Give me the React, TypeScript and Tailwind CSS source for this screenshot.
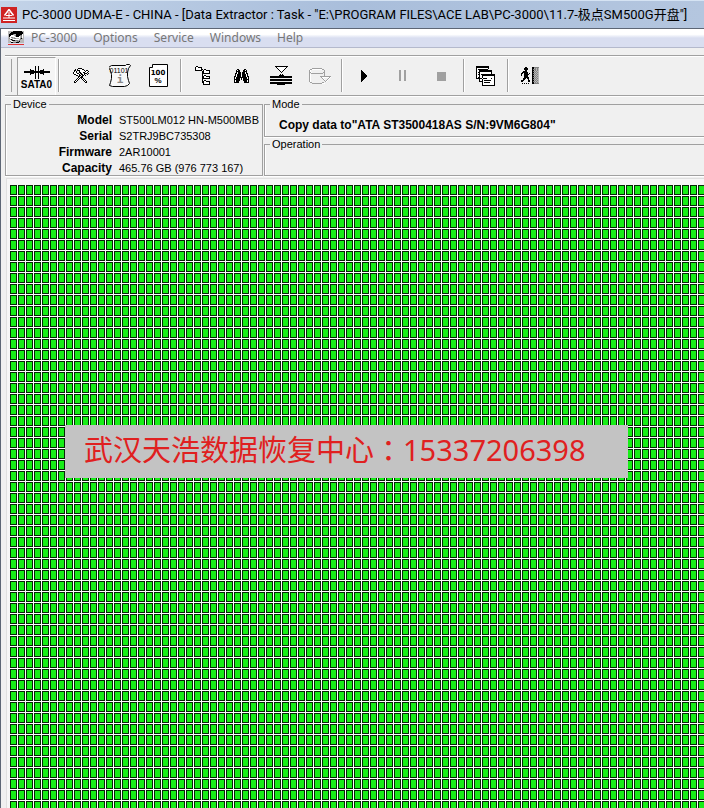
import type { ReactNode } from 'react';

interface PixelIconProps {
  rows: string[];
  className?: string;
}

// '#' = solid pixel, '+' = grey pixel, '-' = light grey pixel, 'o' = white pixel
const PixelIcon = ({ rows, className }: PixelIconProps) => {
  const width = Math.max(...rows.map((row) => row.length));
  const trace = (mark: string) =>
    rows
      .map((row, y) =>
        [...row].map((c, x) => (c === mark ? `M${x} ${y}h1v1h-1z` : '')).join('')
      )
      .join('');

  return (
    <svg
      width={width}
      height={rows.length}
      viewBox={`0 0 ${width} ${rows.length}`}
      shapeRendering="crispEdges"
      className={className}
      aria-hidden="true"
    >
      <path d={trace('o')} fill="#fff" />
      <path d={trace('-')} fill="#b8b8b8" />
      <path d={trace('+')} fill="#828282" />
      <path d={trace('#')} fill="currentColor" />
    </svg>
  );
};

const toolsRows = [
  '.....####.......',
  '..#.#oooo##.....',
  '.##.###oooo#.##.',
  '.#o#..#ooooo#oo#',
  '#oo#..##oo##oo#.',
  '#ooo##o##oo###.#',
  '.##ooo#.##o#..#.',
  '...##o##.##o#...',
  '.....##o##......',
  '.....#o###......',
  '....#o#.#o#.....',
  '...#o#...#o#....',
  '..#o#.....#o#...',
  '.#o#.......#o#..',
  '.##.........##..',
];

const treeRows = [
  '.##.............',
  '#oo####.........',
  '#ooooo#.........',
  '#ooooo##.##.....',
  '#######.#oo####.',
  '.......##ooooo#.',
  '.......##ooooo#.',
  '.......########.',
  '.......#........',
  '.......#.##.....',
  '.......##oo####.',
  '.......##ooooo#.',
  '.......########.',
  '.......#........',
  '.......#.##.....',
  '.......##oo####.',
  '.......##ooooo#.',
  '........#ooooo#.',
  '........#######.',
];

const binocularRows = [
  '...##.....##...',
  '..#o##...##o#..',
  '..####...####..',
  '..#o###.###o#..',
  '.##o###.###o##.',
  '.#o####.####o#.',
  '.#o####o####o#.',
  '##o####o####o##',
  '#o###########o#',
  '#o####o#o####o#',
  '######o#o######',
  '#o####...####o#',
  '#o###.....###o#',
  '#####.....#####',
];

const stackRows = [
  '.....#############....',
  '......#ooooooooo#.....',
  '.......#ooooooo#......',
  '........#ooooo#.......',
  '.........#ooo#........',
  '..........#o#.........',
  '...........#..........',
  '......................',
  '..........#.#.........',
  '.........#####........',
  '######################',
  '######################',
  '......................',
  '######################',
  '######################',
  '......................',
  '######################',
  '######################',
  '.......########.......',
];

const diskRows = [
  '...##########.........',
  '.##oooooooooo##.......',
  '#o.............#......',
  '#o.............#......',
  '##o...........##......',
  '#.############.#......',
  '#o.............#......',
  '#o.............#......',
  '#o.........###########',
  '#o..........#ooooooo#o',
  '#o...........#o....#o.',
  '#o............#o..#o..',
  '#o.............#.#o...',
  '#o..............#o....',
  '.##..........##.......',
  '...##########ooo......',
];

const windowsRows = [
  '#############......',
  '#############......',
  '#ooooooooooo#......',
  '#o##########.......',
  '#oo#############...',
  '#oo#############...',
  '#o##ooooooooooo#...',
  '#oo#ooooooooooo#...',
  '#o##o##############',
  '#oo#oo#############',
  '#oo#oo#ooooooooooo#',
  '#o##oo#ooooooooooo#',
  '######o####oooo#oo#',
  '...#oo#ooooooooooo#',
  '...#oo#o#######ooo#',
  '...####ooooooooooo#',
  '......#o######oooo#',
  '......#ooooooooooo#',
  '......#ooooooooooo#',
  '......#############',
];

const exitRows = [
  '....##.....##+++++',
  '...####....##-+-+-',
  '...####....#+++-+-',
  '....##.....##-+-+-',
  '..####.....#++-+--',
  '.######....##-+-+-',
  '##.####.#..#++-+--',
  '#..#####...##-+-+-',
  '#..####....#++-+--',
  '...####....##-+-+-',
  '...#####...#++-+--',
  '..###.##...##-+-+-',
  '..##...#...#++-+--',
  '###....##..##-+-+-',
  '##.....##..#++-+--',
  '...........##-+-+-',
  '.#.#.#.#...##+++++',
];

const menuDiskRows = [
  '-----#########--',
  '---############-',
  '--#############-',
  '-####+--######o-',
  '-##ooo-+####++o-',
  '-#ooooo-###o-+o-',
  '--o++--ooooo-+o-',
  '-+oo--++---o+#--',
  '--+#+oooooo-+---',
  '--o-###+++-+----',
  '--+oo----++#----',
  '---##+++###-----',
];

const AppLogo = () => (
  <svg width="16" height="16" viewBox="0 0 16 16" aria-hidden="true">
    <rect width="16" height="16" fill="#cf2323" />
    <path d="M8 2.500 3.500 8.500M8 2.500l4.500 6" stroke="#fff" strokeWidth="1.500" fill="none" />
    <path d="M5 8.500h6M2 11h12M2 13.500h12" stroke="#fff" strokeWidth="1.200" />
    <path d="M8 5v6" stroke="#fff" strokeWidth="1" />
  </svg>
);

const SataIcon = () => (
  <svg width="26" height="13" viewBox="0 0 26 13" shapeRendering="crispEdges" aria-hidden="true">
    <path d="M0 5h26v2H0zM6 3h1v6H6zM7 4h3v4H7zM19 3h1v6h-1zM16 4h3v4h-3z" fill="#000" />
    <path d="M11 0h1v13h-1zM14 0h1v13h-1z" fill="#000" />
  </svg>
);

const ScrollIcon = () => (
  <svg width="22" height="23" viewBox="0 0 22 23" aria-hidden="true">
    <path
      d="M2.500 1.500h14l1-1h3l1 1-2 3-1 4v4l1 4 1 3-2 2-3 1h-12l-3-1 1-3 1-4v-4l-1-4-2-3z"
      fill="#f8f8f8"
      stroke="#000"
    />
    <text x="10" y="9" fontSize="7" textAnchor="middle" fontFamily="Liberation Sans, sans-serif">
      01101
    </text>
    <text x="11" y="19" fontSize="11" fontWeight="bold" textAnchor="middle" fill="#888" fontFamily="DejaVu Sans Mono, monospace">
      i
    </text>
  </svg>
);

const PercentIcon = () => (
  <svg width="19" height="23" viewBox="0 0 19 23" aria-hidden="true">
    <path d="M3.500 .5h15v22H.5v-19h3z" fill="#fff" stroke="#000" />
    <text x="9" y="11" fontSize="7" fontWeight="bold" textAnchor="middle" fontFamily="DejaVu Sans, sans-serif">
      100
    </text>
    <text x="9" y="19" fontSize="8" fontWeight="bold" textAnchor="middle" fontFamily="Liberation Sans, sans-serif">
      %
    </text>
  </svg>
);

const Glyph = ({ d, fill }: { d: string; fill: string }) => (
  <svg width="12" height="12" viewBox="0 0 12 12" shapeRendering="crispEdges" aria-hidden="true">
    <path d={d} fill={fill} />
  </svg>
);

interface Tool {
  label: string;
  icon: ReactNode;
  disabled?: boolean;
}

const toolGroups: Tool[][] = [
  [
    { label: 'Settings', icon: <PixelIcon rows={toolsRows} /> },
    { label: 'Script', icon: <ScrollIcon /> },
    { label: 'Statistics', icon: <PercentIcon /> },
  ],
  [
    { label: 'Folder tree', icon: <PixelIcon rows={treeRows} /> },
    { label: 'Find', icon: <PixelIcon rows={binocularRows} /> },
    { label: 'Filter', icon: <PixelIcon rows={stackRows} /> },
    { label: 'Save', icon: <PixelIcon rows={diskRows} className="text-[#a0a0a0]" />, disabled: true },
  ],
  [
    { label: 'Start', icon: <Glyph d="M3 0h1v1h1v1h1v1h1v1h1v1h1v2H8v1H7v1H6v1H5v1H4v1H3z" fill="#000" /> },
    { label: 'Pause', icon: <Glyph d="M2 0h2v11H2zM7 0h2v11H7z" fill="#a0a0a0" />, disabled: true },
    { label: 'Stop', icon: <Glyph d="M1 2h9v9H1z" fill="#a0a0a0" />, disabled: true },
  ],
  [{ label: 'Windows', icon: <PixelIcon rows={windowsRows} /> }],
  [{ label: 'Exit', icon: <PixelIcon rows={exitRows} /> }],
];

const menus = ['PC-3000', 'Options', 'Service', 'Windows', 'Help'];

const device = [
  { name: 'Model', value: 'ST500LM012 HN-M500MBB' },
  { name: 'Serial', value: 'S2TRJ9BC735308' },
  { name: 'Firmware', value: '2AR10001' },
  { name: 'Capacity', value: '465.76 GB (976 773 167)' },
];

const Separator = () => (
  <div className="my-[3px] ml-[2px] mr-px w-[2px] shrink-0 border-l border-[#a0a0a0] bg-white" />
);

const Toolbar = () => (
  <div className="ml-[4px] mt-[7px] flex h-[41px] border-y border-[#a0a0a0] shadow-[inset_0_1px_#fff,0_1px_#fff]">
    <div className="my-[3px] ml-[6px] w-px shrink-0 bg-[#a0a0a0]" />
    <button className="ml-[5px] mt-px flex w-[39px] shrink-0 flex-col items-center border border-b-0 border-[#a0a0a0] border-r-white bg-[#f5f5f5] pt-[8px]">
      <SataIcon />
      <span className="font-['Liberation_Sans',sans-serif] text-[10px] font-bold leading-[12px]">SATA0</span>
    </button>
    {toolGroups.map((group, i) => (
      <div key={i} className="flex shrink-0">
        <Separator />
        {group.map((tool) => (
          <button
            key={tool.label}
            aria-label={tool.label}
            disabled={tool.disabled}
            className="flex w-[39px] items-center justify-center"
          >
            {tool.icon}
          </button>
        ))}
      </div>
    ))}
  </div>
);

const Group = ({ title, className, children }: { title: string; className: string; children?: ReactNode }) => (
  <fieldset className={`border border-[#a0a0a0] shadow-[inset_1px_0_#fff,0_1px_#fff] ${className}`}>
    <legend className="ml-[5px] px-[2px] leading-[13px]">{title}</legend>
    {children}
  </fieldset>
);

const InfoPanels = () => (
  <div className="mt-[2px] flex h-[78px] gap-px pl-[4px] font-['Liberation_Sans',sans-serif] text-[11px]">
    <Group title="Device" className="w-[258px] shrink-0">
      <dl className="grid grid-cols-[106px_1fr] gap-x-[7px] whitespace-nowrap pt-px leading-[16px]">
        {device.map((item) => (
          <div key={item.name} className="contents">
            <dt className="text-right text-xs font-bold leading-[16px]">{item.name}</dt>
            <dd>{item.value}</dd>
          </div>
        ))}
      </dl>
    </Group>
    <div className="flex min-w-0 flex-1 flex-col">
      <Group title="Mode" className="h-[39px] border-r-0">
        <p className="pl-[14px] pt-[6px] text-xs font-bold leading-[16px]">
          Copy data to"ATA ST3500418AS S/N:9VM6G804"
        </p>
      </Group>
      <Group title="Operation" className="mt-px h-[39px] border-r-0" />
    </div>
  </div>
);

const SectorMap = () => (
  <div className="ml-[5px] mt-[2px] flex flex-1 border-l border-t border-[#e0e0e0] bg-[#f6f6f6] pl-[3px] pt-[6px]">
    <div className="flex-1 bg-[#17ee17] bg-[linear-gradient(to_right,transparent_7px,#fff_7px),linear-gradient(to_bottom,transparent_10px,#fff_10px),linear-gradient(to_right,#062806_1px,transparent_1px,transparent_6px,#062806_6px),linear-gradient(to_bottom,#062806_1px,transparent_1px,transparent_9px,#062806_9px)] bg-[size:8px_11px]" />
  </div>
);

const App = () => {
  return (
    <div className="relative flex min-h-screen flex-col overflow-hidden bg-[#f0f0f0] text-black">
      <header className="flex h-[28px] items-center gap-[5px] border-t border-[#d5e3f3] bg-linear-to-r from-[#c3d3e8] via-[#a9bedb] to-[#b4c6df] pl-px">
        <AppLogo />
        <h1 className="whitespace-nowrap font-['Roboto','Noto_Sans_CJK_SC',sans-serif] text-[13px]">
          PC-3000 UDMA-E - CHINA - [Data Extractor : Task - "E:\PROGRAM FILES\ACE LAB\PC-3000\11.7-极点SM500G开盘"]
        </h1>
      </header>

      <div className="flex flex-1 flex-col border-l border-t border-[#5d6675]">
        <nav className="flex h-[19px] items-center border-b border-[#b4b9cc] bg-linear-to-b from-white from-30% to-[#d9def0] to-50% pl-[7px] font-['Noto_Sans',sans-serif] text-xs text-[#777]">
          <div className="mr-[7px] border-b border-[#e03030] pb-px text-black">
            <PixelIcon rows={menuDiskRows} />
          </div>
          <div className="flex gap-4">
            {menus.map((menu) => (
              <button key={menu} className="leading-[16px]">
                {menu}
              </button>
            ))}
          </div>
        </nav>

        <Toolbar />
        <InfoPanels />
        <SectorMap />
      </div>

      {/* Contact banner over the map */}
      <div className="absolute left-[65px] top-[425px] flex h-[53px] w-[563px] items-center whitespace-nowrap bg-[#c3c3c3] pb-[3px] pl-[19px] font-['Noto_Sans','Noto_Sans_CJK_SC',sans-serif] text-[29px] text-[#e02020]">
        武汉天浩数据恢复中心<span className="font-['Noto_Sans_CJK_TC',sans-serif]">：</span>15337206398
      </div>
    </div>
  );
};

export default App;
